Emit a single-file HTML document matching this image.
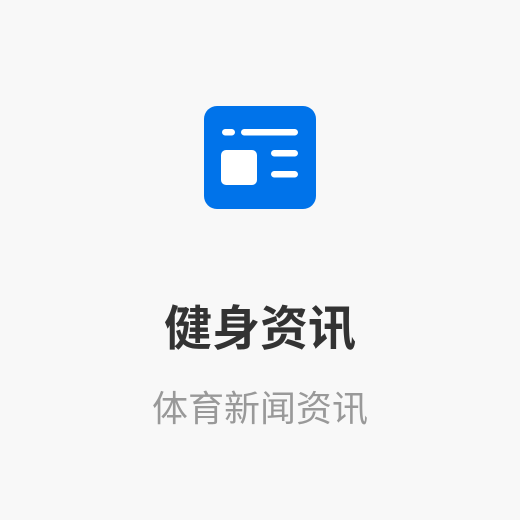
<!DOCTYPE html>
<html><head><meta charset="utf-8"><style>
html,body{margin:0;padding:0;width:520px;height:520px;background:#f8f8f8;overflow:hidden}
.t{position:absolute;left:0;width:520px;text-align:center;font-family:"Liberation Sans","Noto Sans CJK SC",sans-serif;white-space:nowrap}
</style></head><body>
<svg style="position:absolute;left:0;top:0" width="520" height="520">
<rect x="204" y="106" width="112" height="103" rx="13" fill="#0073EA"/>
<g fill="#fff">
<rect x="222" y="129" width="13" height="6.5" rx="3.25"/>
<rect x="241" y="129" width="57" height="6.5" rx="3.25"/>
<rect x="221" y="150" width="36" height="35" rx="5"/>
<rect x="271" y="150" width="27" height="6.5" rx="3.25"/>
<rect x="271" y="171" width="27" height="6.5" rx="3.25"/>
</g>
</svg>
<div class="t" style="top:300px;font-size:48px;line-height:60px;font-weight:bold;color:#333">健身资讯</div>
<div class="t" style="top:386px;font-size:36px;line-height:46px;color:#999">体育新闻资讯</div>
</body></html>
